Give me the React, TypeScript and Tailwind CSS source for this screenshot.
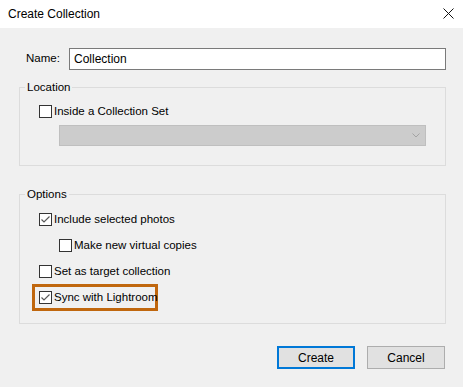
import type { ReactNode } from 'react'

const font = { fontFamily: '"Liberation Sans", Arial, sans-serif' }

function Box({ checked }: { checked?: boolean }) {
  return (
    <span className="flex h-[13px] w-[13px] shrink-0 items-center justify-center border border-[#333333] bg-white">
      {checked ? (
        <svg width="11" height="11" viewBox="0 0 11 11" fill="none">
          <path d="M1.5 5.5 L4 8 L9.5 2.5" stroke="#5a5a5a" strokeWidth="1.2" />
        </svg>
      ) : null}
    </span>
  )
}

function Check({ checked, label }: { checked?: boolean; label: string }) {
  return (
    <label className="flex h-[13px] items-center gap-[2px] whitespace-nowrap text-[11.5px] leading-none text-black">
      <Box checked={checked} />
      <span>{label}</span>
    </label>
  )
}

function Group({ title, children, className = '' }: { title: string; children: ReactNode; className?: string }) {
  return (
    <fieldset className={`m-0 min-w-0 border border-[#dcdcdc] px-[19px] pb-[19px] ${className}`}>
      <legend className="-ml-[14px] px-[2px] text-[11.5px] leading-[14px] text-black">{title}</legend>
      {children}
    </fieldset>
  )
}

export default function App() {
  return (
    <div className="flex h-[387px] w-[463px] flex-col bg-[#f0f0f0]" style={font}>
      <div className="flex h-[28px] shrink-0 items-center justify-between bg-white pl-[8px] pr-[9px]">
        <span className="text-[12px] text-black">Create Collection</span>
        <svg width="11" height="11" viewBox="0 0 11 11" className="mb-[2px]">
          <path d="M0.5 0.5 L10.5 10.5 M10.5 0.5 L0.5 10.5" stroke="#111" strokeWidth="1" />
        </svg>
      </div>

      <div className="flex flex-col pl-[19px] pr-[17px] pt-[20px]">
        <div className="flex h-[22px] items-center">
          <span className="ml-[7px] w-[43px] text-[11.5px] text-black">Name:</span>
          <div className="flex h-[22px] flex-1 items-center border border-[#7a7a7a] bg-white px-[4px] text-[12px] text-black">
            Collection
          </div>
        </div>

        <Group title="Location" className="mt-[10px]">
          <div className="pt-[11px]">
            <Check label="Inside a Collection Set" />
          </div>
          <div className="ml-[20px] mt-[7px] flex h-[21px] items-center justify-end border border-[#bfbfbf] bg-[#cccccc] pr-[5px]">
            <svg width="8" height="5" viewBox="0 0 8 5" fill="none">
              <path d="M0.5 0.5 L4 4 L7.5 0.5" stroke="#a3a3a3" strokeWidth="1" />
            </svg>
          </div>
        </Group>

        <Group title="Options" className="mt-[21px]">
          <div className="flex flex-col gap-[13px] pt-[12px]">
            <Check checked label="Include selected photos" />
            <div className="pl-[20px]">
              <Check label="Make new virtual copies" />
            </div>
            <Check label="Set as target collection" />
            <div className="-mx-[7px] -my-[7px] w-[126px] border-[3px] border-[#c0670e] p-[4px]">
              <Check checked label="Sync with Lightroom" />
            </div>
          </div>
        </Group>

        <div className="mt-[22px] flex justify-end gap-[12px] pr-[1px]">
          <button className="h-[23px] w-[78px] border-2 border-[#0078d7] bg-[#e1e1e1] text-[12px] text-black">
            Create
          </button>
          <button className="h-[23px] w-[78px] border border-[#adadad] bg-[#e1e1e1] text-[12px] text-black">
            Cancel
          </button>
        </div>
      </div>
    </div>
  )
}
